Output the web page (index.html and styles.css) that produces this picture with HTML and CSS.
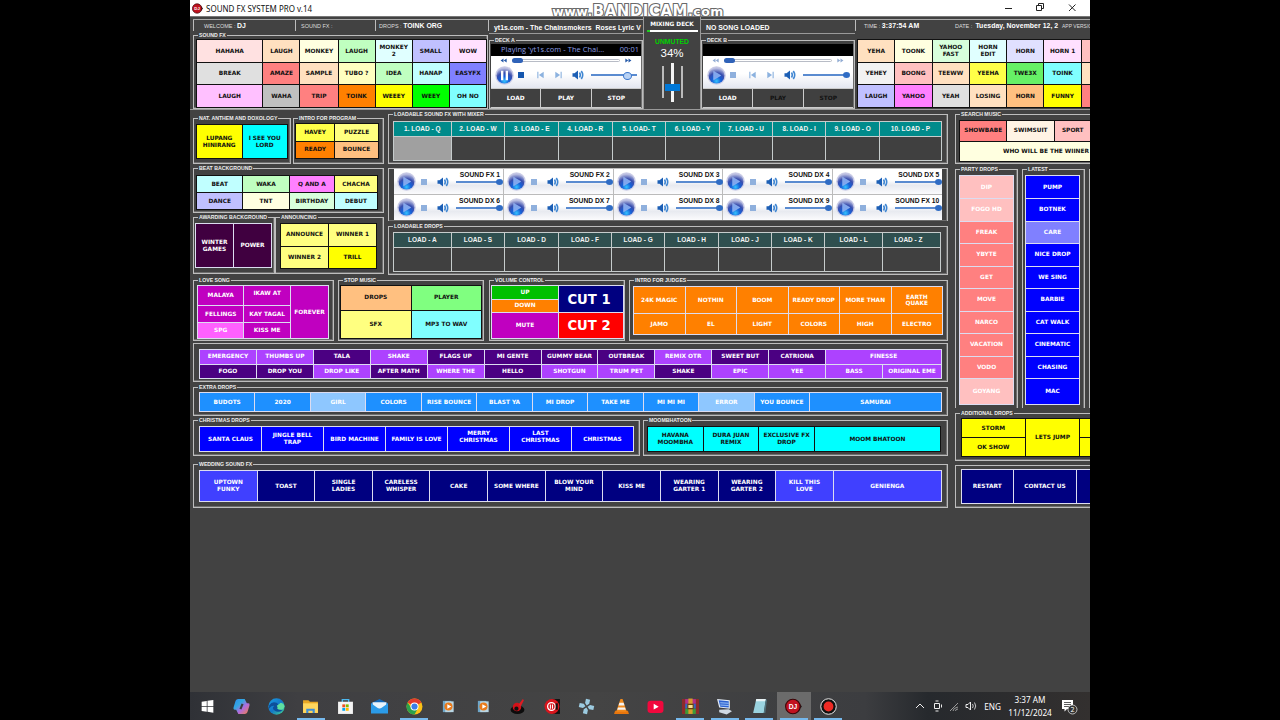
FILE: index.html
```html
<!DOCTYPE html>
<html lang="en">
<head>
  <meta charset="UTF-8" />
  <meta name="viewport" content="width=device-width, initial-scale=1.0"/>
  <title>SOUND FX SYSTEM PRO v.14</title>
  <link rel="stylesheet" href="styles.css">
</head>
<body>

  <!-- shared icons -->
  <svg class="defs" width="0" height="0">
    <defs>
      <radialGradient id="orb" cx="50%" cy="85%" r="80%">
        <stop offset="0" stop-color="#35c3ff"/>
        <stop offset="0.35" stop-color="#1560d8"/>
        <stop offset="0.65" stop-color="#3a4fae"/>
        <stop offset="1" stop-color="#b9bde0"/>
      </radialGradient>
      <linearGradient id="edgeGrad" x1="0" y1="0" x2="1" y2="1">
        <stop offset="0" stop-color="#1b9de2"/>
        <stop offset="0.5" stop-color="#1377c9"/>
        <stop offset="1" stop-color="#45d88b"/>
      </linearGradient>
      <linearGradient id="copilot" x1="0" y1="0" x2="1" y2="1">
        <stop offset="0" stop-color="#2a8df0"/>
        <stop offset="0.35" stop-color="#35a7e0"/>
        <stop offset="0.6" stop-color="#b06be0"/>
        <stop offset="1" stop-color="#f5803d"/>
      </linearGradient>
    </defs>
    <symbol id="play" viewBox="0 0 20 20">
      <circle cx="10" cy="10" r="9.8" fill="#c9cbe6"/>
      <circle cx="10" cy="10" r="8.4" fill="url(#orb)"/>
      <path d="M7 5.5 14.5 10 7 14.5z" fill="#7fa6ee" stroke="#a9c4f6" stroke-width="0.5"/>
    </symbol>
    <symbol id="pause" viewBox="0 0 20 20">
      <circle cx="10" cy="10" r="9.8" fill="#c9cbe6"/>
      <circle cx="10" cy="10" r="8.4" fill="url(#orb)"/>
      <path d="M6.3 5h2.5v10H6.3zM11.2 5h2.5v10h-2.5z" fill="#fff"/>
    </symbol>
    <symbol id="prev" viewBox="0 0 10 10">
      <path d="M1 1h1.4v8H1zM9 1v8L3 5z" fill="#8cb2df"/>
    </symbol>
    <symbol id="next" viewBox="0 0 10 10">
      <path d="M7.600 1H9v8H7.600zM1 1v8l6-4z" fill="#8cb2df"/>
    </symbol>
    <symbol id="volume" viewBox="0 0 12 10">
      <path d="M0.500 3.200h2L6 0.500v9L2.500 6.800h-2z" fill="#1c5fb5"/>
      <path d="M7.500 2.500q1.500 2.500 0 5M9.300 1q2.800 4 0 8" fill="none" stroke="#3f86d2" stroke-width="1.600"/>
    </symbol>
    <symbol id="rew" viewBox="0 0 8 6">
      <path d="M4 0.500v5L0.500 3zM7.800 0.500v5L4.300 3z" fill="#2459a8"/>
    </symbol>
    <symbol id="ffw" viewBox="0 0 8 6">
      <path d="M4 0.500v5L7.500 3zM0.200 0.500v5L3.700 3z" fill="#2459a8"/>
    </symbol>
    <symbol id="dj" viewBox="0 0 14 14">
      <path d="M10.500 3 14 7l-3.500 4z" fill="#222"/>
      <circle cx="6.500" cy="7" r="6" fill="#c1121f" stroke="#3a0508" stroke-width="0.900"/>
      <text x="6.500" y="9" text-anchor="middle" font-family="Liberation Sans" font-size="5.500" font-weight="bold" fill="#fff">DJ</text>
    </symbol>
    <symbol id="media" viewBox="0 0 16 16">
      <path d="M2 2h9v12H2z" fill="#6fa7c9"/>
      <path d="M4.500 2.500h9V14h-9z" fill="#b9d6e4"/>
      <circle cx="8" cy="8" r="4.300" fill="#e87b1c"/>
      <path d="M6.700 5.500 11 8l-4.300 2.500z" fill="#fff"/>
    </symbol>
  </svg>

  <div class="app">

    <!-- WINDOW TITLE -->
    <div class="titlebar">
      <svg class="logo"><use href="#dj"/></svg>
      <span class="title">SOUND FX SYSTEM PRO v.14</span>
      <svg class="winbtns" viewBox="0 0 80 12" fill="none" stroke="#222">
        <path d="M5 6.500h7"/>
        <path d="M36.500 3.500h5v5h-5zM38.500 3.500v-2h5v5h-2"/>
        <path d="M69 2.500l6.500 6.500M75.500 2.500 69 9"/>
      </svg>
    </div>
    <div class="watermark">www.<span>BANDICAM</span>.com</div>

    <!-- TOP ROW -->
    <div class="top">
      <div class="fx-col">
        <div class="info">
          <div class="info-cell w1">WELCOME : <b>DJ</b></div>
          <div class="info-cell w2">SOUND FX :</div>
          <div class="info-cell w3">DROPS : <b>TOINK ORG</b></div>
        </div>
        <div class="group fx">
          <span class="legend">SOUND FX</span>
          <div class="pads dark fx-pads">
            <button class="rose">HAHAHA</button>
            <button class="peach">LAUGH</button>
            <button class="cream">MONKEY</button>
            <button class="mint">LAUGH</button>
            <button class="ice">MONKEY<br>2</button>
            <button class="lavender">SMALL</button>
            <button class="blush">WOW</button>
            <button class="silver">BREAK</button>
            <button class="coral">AMAZE</button>
            <button class="peach">SAMPLE</button>
            <button class="lemon">TUBO ?</button>
            <button class="mint">IDEA</button>
            <button class="aqua">HANAP</button>
            <button class="periwinkle">EASYFX</button>
            <button class="pink">LAUGH</button>
            <button class="gray">WAHA</button>
            <button class="coral">TRIP</button>
            <button class="orange">TOINK</button>
            <button class="yellow">WEEEY</button>
            <button class="green">WEEY</button>
            <button class="cyan-soft">OH NO</button>
          </div>
        </div>
      </div>

      <div class="deck-col">
        <div class="song">yt1s.com - The Chainsmokers&nbsp; Roses Lyric V</div>
        <div class="group deck">
          <span class="legend">DECK A</span>
          <div class="display"><span>Playing 'yt1s.com - The Chai...</span><span>00:01</span></div>
          <div class="controls">
            <div class="seek"><svg><use href="#rew"/></svg><i></i><svg><use href="#ffw"/></svg></div>
            <div class="keys">
              <svg class="orb"><use href="#pause"/></svg>
              <span class="stop on"></span>
              <svg class="skip"><use href="#prev"/></svg>
              <svg class="skip"><use href="#next"/></svg>
              <svg class="vol"><use href="#volume"/></svg>
              <span class="slider mid"></span>
            </div>
          </div>
          <div class="deck-btns"><button>LOAD</button><button>PLAY</button><button>STOP</button></div>
        </div>
      </div>

      <div class="mixer">
        <div class="mix-title">MIXING DECK</div>
        <div class="mix-bar"></div>
        <div class="unmuted">UNMUTED</div>
        <div class="percent">34%</div>
        <div class="fader"><i></i><i class="track"></i><i></i></div>
      </div>

      <div class="deck-col deck-b">
        <div class="song">NO SONG LOADED</div>
        <div class="group deck">
          <span class="legend">DECK B</span>
          <div class="display"></div>
          <div class="controls">
            <div class="seek off"><svg><use href="#rew"/></svg><i></i><svg><use href="#ffw"/></svg></div>
            <div class="keys">
              <svg class="orb"><use href="#play"/></svg>
              <span class="stop"></span>
              <svg class="skip"><use href="#prev"/></svg>
              <svg class="skip"><use href="#next"/></svg>
              <svg class="vol"><use href="#volume"/></svg>
              <span class="slider"></span>
            </div>
          </div>
          <div class="deck-btns"><button>LOAD</button><button class="off">PLAY</button><button class="off">STOP</button></div>
        </div>
      </div>

      <div class="fx-right">
        <div class="info">
          <div class="info-cell time">TIME : <b>3:37:54 AM</b></div>
          <div class="info-cell date">DATE :&nbsp; <b>Tuesday, November 12, 2</b></div>
          <div class="info-cell ver">APP VERSION</div>
        </div>
        <div class="pads dark fx2-pads">
          <button class="peach">YEHA</button>
          <button class="cream">TOONK</button>
          <button class="mint-pale">YAHOO<br>FAST</button>
          <button class="ice">HORN<br>EDIT</button>
          <button class="lilac">HORN</button>
          <button class="blush">HORN 1</button>
          <button class="salmon"></button>
          <button class="smoke">YEHEY</button>
          <button class="salmon">BOONG</button>
          <button class="peach">TEEWW</button>
          <button class="yellow-mid">YEEHA</button>
          <button class="green-mid">TWE3X</button>
          <button class="cyan-soft">TOINK</button>
          <button class="peach"></button>
          <button class="lavender">LAUGH</button>
          <button class="violet-soft">YAHOO</button>
          <button class="silver">YEAH</button>
          <button class="peach">LOSING</button>
          <button class="tan">HORN</button>
          <button class="yellow">FUNNY</button>
          <button class="coral"></button>
        </div>
      </div>
    </div>

    <!-- MAIN AREA -->
    <div class="main">
      <div class="left">
        <div class="row-a">
          <div class="side">
            <div class="pair">
              <div class="group nat">
                <span class="legend">NAT. ANTHEM AND DOXOLOGY</span>
                <div class="pads dark nat-pads">
                  <button class="yellow">LUPANG<br>HINIRANG</button>
                  <button class="cyan">I SEE YOU<br>LORD</button>
                </div>
              </div>
              <div class="group program">
                <span class="legend">INTRO FOR PROGRAM</span>
                <div class="pads dark program-pads">
                  <button class="yellow-mid">HAVEY</button>
                  <button class="yellow-soft">PUZZLE</button>
                  <button class="orange">READY</button>
                  <button class="tan">BOUNCE</button>
                </div>
              </div>
            </div>
            <div class="group beat">
              <span class="legend">BEAT BACKGROUND</span>
              <div class="pads dark beat-pads">
                <button class="aqua">BEAT</button>
                <button class="mint">WAKA</button>
                <button class="violet-soft">Q AND A</button>
                <button class="yellow-soft">CHACHA</button>
                <button class="lavender">DANCE</button>
                <button class="cream">TNT</button>
                <button class="mint-pale">BIRTHDAY</button>
                <button class="aqua">DEBUT</button>
              </div>
            </div>
            <div class="pair last">
              <div class="group award">
                <span class="legend">AWARDING BACKGROUND</span>
                <div class="pads light award-pads">
                  <button class="plum">WINTER<br>GAMES</button>
                  <button class="plum">POWER</button>
                </div>
              </div>
              <div class="group announce">
                <span class="legend">ANNOUNCING</span>
                <div class="pads dark announce-pads">
                  <button class="yellow-soft">ANNOUNCE</button>
                  <button class="yellow-soft">WINNER 1</button>
                  <button class="yellow-soft">WINNER 2</button>
                  <button class="yellow">TRILL</button>
                </div>
              </div>
            </div>
          </div>

          <div class="center">
            <div class="group loads">
              <span class="legend">LOADABLE SOUND FX WITH MIXER</span>
              <div class="slots teal">
                <b>1. LOAD - Q</b><b>2. LOAD - W</b><b>3. LOAD - E</b><b>4. LOAD - R</b><b>5. LOAD- T</b>
                <b>6. LOAD - Y</b><b>7. LOAD - U</b><b>8. LOAD - I</b><b>9. LOAD - O</b><b>10. LOAD - P</b>
                <i class="selected"></i><i></i><i></i><i></i><i></i><i></i><i></i><i></i><i></i><i></i>
              </div>
            </div>
            <div class="group players">
              <div class="player-grid" id="players"></div>
            </div>
            <div class="group drops">
              <span class="legend">LOADABLE DROPS</span>
              <div class="slots slate">
                <b>LOAD - A</b><b>LOAD - S</b><b>LOAD - D</b><b>LOAD - F</b><b>LOAD - G</b>
                <b>LOAD - H</b><b>LOAD - J</b><b>LOAD - K</b><b>LOAD - L</b><b class="z">LOAD - Z</b>
                <i></i><i></i><i></i><i></i><i></i><i></i><i></i><i></i><i></i><i></i>
              </div>
            </div>
          </div>
        </div>

        <div class="row-b">
          <div class="group love">
            <span class="legend">LOVE SONG</span>
            <div class="pads light love-pads">
              <button class="magenta">MALAYA</button>
              <button class="magenta up">IKAW AT</button>
              <button class="magenta tall">FOREVER</button>
              <button class="magenta">FELLINGS</button>
              <button class="magenta">KAY TAGAL</button>
              <button class="magenta-soft">SPG</button>
              <button class="magenta">KISS ME</button>
            </div>
          </div>
          <div class="group stopmusic">
            <span class="legend">STOP MUSIC</span>
            <div class="pads dark stop-pads">
              <button class="tan">DROPS</button>
              <button class="green-soft">PLAYER</button>
              <button class="yellow-soft">SFX</button>
              <button class="cyan-soft">MP3 TO WAV</button>
            </div>
          </div>
          <div class="group volume">
            <span class="legend">VOLUME CONTROL</span>
            <div class="vol-pads">
              <div class="pads light vol-left">
                <button class="green-dark">UP</button>
                <button class="orange">DOWN</button>
                <button class="magenta">MUTE</button>
              </div>
              <div class="pads light vol-right">
                <button class="navy cut">CUT 1</button>
                <button class="red cut">CUT 2</button>
              </div>
            </div>
          </div>
          <div class="group judges">
            <span class="legend">INTRO FOR JUDGES</span>
            <div class="pads light judge-pads">
              <button class="orange">24K MAGIC</button>
              <button class="orange">NOTHIN</button>
              <button class="orange">BOOM</button>
              <button class="orange">READY DROP</button>
              <button class="orange">MORE THAN</button>
              <button class="orange">EARTH<br>QUAKE</button>
              <button class="orange">JAMO</button>
              <button class="orange">EL</button>
              <button class="orange">LIGHT</button>
              <button class="orange">COLORS</button>
              <button class="orange">HIGH</button>
              <button class="orange">ELECTRO</button>
            </div>
          </div>
        </div>

        <div class="group dance">
          <div class="pads light dance-pads">
            <button class="purple">EMERGENCY</button>
            <button class="purple">THUMBS UP</button>
            <button class="indigo">TALA</button>
            <button class="purple">SHAKE</button>
            <button class="indigo">FLAGS UP</button>
            <button class="indigo">MI GENTE</button>
            <button class="indigo">GUMMY BEAR</button>
            <button class="indigo">OUTBREAK</button>
            <button class="purple">REMIX OTR</button>
            <button class="indigo">SWEET BUT</button>
            <button class="indigo">CATRIONA</button>
            <button class="purple wide">FINESSE</button>
            <button class="indigo">FOGO</button>
            <button class="indigo">DROP YOU</button>
            <button class="purple">DROP LIKE</button>
            <button class="indigo">AFTER MATH</button>
            <button class="purple">WHERE THE</button>
            <button class="indigo">HELLO</button>
            <button class="purple">SHOTGUN</button>
            <button class="purple">TRUM PET</button>
            <button class="indigo">SHAKE</button>
            <button class="purple">EPIC</button>
            <button class="purple">YEE</button>
            <button class="purple">BASS</button>
            <button class="purple">ORIGINAL EME</button>
          </div>
        </div>

        <div class="group extra">
          <span class="legend">EXTRA DROPS</span>
          <div class="pads light extra-pads">
            <button class="dodger">BUDOTS</button>
            <button class="dodger">2020</button>
            <button class="sky">GIRL</button>
            <button class="dodger">COLORS</button>
            <button class="dodger">RISE BOUNCE</button>
            <button class="dodger">BLAST YA</button>
            <button class="dodger">MI DROP</button>
            <button class="dodger">TAKE ME</button>
            <button class="dodger">MI MI MI</button>
            <button class="sky">ERROR</button>
            <button class="dodger">YOU BOUNCE</button>
            <button class="dodger">SAMURAI</button>
          </div>
        </div>

        <div class="row-c">
          <div class="group xmas">
            <span class="legend">CHRISTMAS DROPS</span>
            <div class="pads light xmas-pads">
              <button class="blue">SANTA CLAUS</button>
              <button class="blue">JINGLE BELL<br>TRAP</button>
              <button class="blue">BIRD MACHINE</button>
              <button class="blue">FAMILY IS LOVE</button>
              <button class="blue up">MERRY<br>CHRISTMAS</button>
              <button class="blue up">LAST<br>CHRISTMAS</button>
              <button class="blue">CHRISTMAS</button>
            </div>
          </div>
          <div class="group moomba">
            <span class="legend">MOOMBHATOON</span>
            <div class="pads dark moomba-pads">
              <button class="cyan">HAVANA<br>MOOMBHA</button>
              <button class="cyan">DURA JUAN<br>REMIX</button>
              <button class="cyan">EXCLUSIVE FX<br>DROP</button>
              <button class="cyan">MOOM BHATOON</button>
            </div>
          </div>
        </div>

        <div class="group wedding">
          <span class="legend">WEDDING SOUND FX</span>
          <div class="pads light wedding-pads">
            <button class="royal">UPTOWN<br>FUNKY</button>
            <button class="navy">TOAST</button>
            <button class="navy">SINGLE<br>LADIES</button>
            <button class="navy">CARELESS<br>WHISPER</button>
            <button class="navy">CAKE</button>
            <button class="navy">SOME WHERE</button>
            <button class="navy">BLOW YOUR<br>MIND</button>
            <button class="navy">KISS ME</button>
            <button class="navy">WEARING<br>GARTER 1</button>
            <button class="navy">WEARING<br>GARTER 2</button>
            <button class="royal">KILL THIS<br>LOVE</button>
            <button class="royal">GENIENGA</button>
          </div>
        </div>
      </div>

      <div class="right">
        <div class="group search">
          <span class="legend">SEARCH MUSIC</span>
          <div class="pads dark search-pads">
            <button class="coral">SHOWBABE</button>
            <button class="linen">SWIMSUIT</button>
            <button class="salmon sport">SPORT</button>
            <button class="cream full">WHO WILL BE THE WIINER</button>
          </div>
        </div>
        <div class="lists">
          <div class="group party">
            <span class="legend">PARTY DROPS</span>
            <div class="pads light list-pads">
              <button class="salmon">DIP</button>
              <button class="salmon">FOGO HD</button>
              <button class="coral">FREAK</button>
              <button class="coral">YBYTE</button>
              <button class="coral">GET</button>
              <button class="coral">MOVE</button>
              <button class="coral">NARCO</button>
              <button class="coral">VACATION</button>
              <button class="coral">VODO</button>
              <button class="salmon">GOYANG</button>
            </div>
          </div>
          <div class="group latest">
            <span class="legend">LATEST</span>
            <div class="pads light list-pads">
              <button class="blue">PUMP</button>
              <button class="blue">BOTNEK</button>
              <button class="periwinkle">CARE</button>
              <button class="blue">NICE DROP</button>
              <button class="blue">WE SING</button>
              <button class="blue">BARBIE</button>
              <button class="blue">CAT WALK</button>
              <button class="blue">CINEMATIC</button>
              <button class="blue">CHASING</button>
              <button class="blue">MAC</button>
            </div>
          </div>
          <div class="group cutoff"></div>
        </div>
        <div class="group additional">
          <span class="legend">ADDITIONAL DROPS</span>
          <div class="pads dark additional-pads">
            <button class="yellow">STORM</button>
            <button class="yellow tall2">LETS JUMP</button>
            <button class="yellow"></button>
            <button class="yellow">OK SHOW</button>
            <button class="yellow"></button>
          </div>
        </div>
        <div class="group system">
          <div class="pads light system-pads">
            <button class="navy">RESTART</button>
            <button class="navy">CONTACT US</button>
            <button class="navy"></button>
          </div>
        </div>
      </div>
    </div>

    <!-- TASKBAR -->
    <div class="taskbar">
      <div class="task"><svg viewBox="0 0 16 16"><path d="M2.500 3.500 7.300 2.800v4.700H2.500zM8 2.700l5.500-.8v5.600H8zM2.500 8.200h4.800v4.700l-4.800-.7zM8 8.200h5.500v5.600L8 13z" fill="#fff"/></svg></div>
      <div class="task"><svg viewBox="0 0 16 16"><path d="M5 1h6l2 4h1.500Q16 5 15.500 7l-1.500 5q-.8 3-3 3H5L3 11H1.500Q0 11 .5 9L2 4q.8-3 3-3z" fill="url(#copilot)"/><path d="M9 5.500 7 10.500" stroke="#3c3c40" stroke-width="2"/></svg></div>
      <div class="task"><svg viewBox="0 0 16 16"><circle cx="8" cy="8" r="7.700" fill="url(#edgeGrad)"/><path d="M1 7q3-4.500 7-2.500 3 1.500 1.500 5 .8 1.500 4.500 1.500Q10 14.500 6.500 12T6 7.500Q3.500 6.500 1 10z" fill="#0d4f9b"/><path d="M8.300 7.200q1.200 1.300.4 3 2 1.600 5.600.4L15.600 8Q15 5 12 4.500z" fill="#5fe0a0"/></svg></div>
      <div class="task open"><svg viewBox="0 0 16 16"><path d="M1 2h5l1.500 1.500H15V14H1z" fill="#e9a825"/><path d="M1 5h14v9H1z" fill="#ffd75e"/><path d="M4 10h8v4h-2v-2H6v2H4z" fill="#3f8fd8"/></svg></div>
      <div class="task"><svg viewBox="0 0 16 16"><path d="M5 4V1.500h6V4" fill="none" stroke="#4db8ee" stroke-width="1.300"/><path d="M1 3.500h14V15H1z" fill="#f4f4f4"/><path d="M5 6h2.700v2.700H5z" fill="#f05022"/><path d="M8.300 6H11v2.700H8.300z" fill="#7fba00"/><path d="M5 9.300h2.700V12H5z" fill="#00a4ef"/><path d="M8.300 9.300H11V12H8.300z" fill="#ffb900"/></svg></div>
      <div class="task"><svg viewBox="0 0 16 16"><path d="M0 5 8 1l8 4v9H0z" fill="#1569b8"/><path d="M1.500 4h13v6h-13z" fill="#e8f4fc"/><path d="M0 5l8 5.500L16 5v9.500H0z" fill="#2b9be8"/></svg></div>
      <div class="task open"><svg viewBox="0 0 16 16"><circle cx="8" cy="8" r="7.500" fill="#fbc116"/><path d="M8 8 1.500 4.200A7.500 7.500 0 0 1 14.500 4.200z" fill="#e33b2e"/><path d="M1.500 4.200A7.500 7.500 0 0 0 8 15.500L11 10 5 9.500z" fill="#2ba24c"/><circle cx="8" cy="8" r="3.800" fill="#fff"/><circle cx="8" cy="8" r="2.900" fill="#3b7de8"/></svg></div>
      <div class="task small"><svg><use href="#media"/></svg></div>
      <div class="task small"><svg><use href="#media"/></svg></div>
      <div class="task"><svg viewBox="0 0 16 16"><ellipse cx="8" cy="11" rx="6.500" ry="4" fill="#0c0c0c"/><circle cx="7.500" cy="8.500" r="4" fill="#d21118"/><path d="M9 6l4-5 1 1-3 6z" fill="#e01b22"/><circle cx="7" cy="10" r="2" fill="#111"/></svg></div>
      <div class="task"><svg viewBox="0 0 16 16"><path d="M8 1h7v14H8z" fill="#111"/><circle cx="7.500" cy="8" r="7" fill="#d8151d"/><circle cx="7" cy="8" r="3.600" fill="none" stroke="#fff" stroke-width="1.200"/><path d="M6 6v4M8 6v4" stroke="#fff"/><path d="M12 5v6" stroke="#111" stroke-width="2"/></svg></div>
      <div class="task"><svg viewBox="0 0 16 16" fill="#9ccbe0"><path d="M6 1h4v4L8 7 6 5zM6 15h4v-4L8 9l-2 2zM1 6v4h4l2-2-2-2zM15 6v4h-4L9 8l2-2z" transform="rotate(12 8 8)"/></svg></div>
      <div class="task"><svg viewBox="0 0 16 16"><path d="M2 12h12l1 3H1z" fill="#e8760c"/><path d="M7 1h2l4 12H3z" fill="#f08a1c"/><path d="M6 4.500h4l.8 2.500H5.200zM4.700 9h6.600l.7 2H4z" fill="#f4f4f4"/></svg></div>
      <div class="task"><svg viewBox="0 0 16 16"><rect x="0.500" y="2.500" width="15" height="11.500" rx="3" fill="#f1083d"/><path d="M6.300 5.500 11 8.200l-4.700 2.700z" fill="#fff"/></svg></div>
      <div class="task open"><svg viewBox="0 0 16 16"><path d="M0 1h16v4.500H0z" fill="#b3308a"/><path d="M0 5.500h16V10H0z" fill="#3566c0"/><path d="M0 10h16v5H0z" fill="#3c9a3a"/><path d="M0 1h3v14H0zM13 1h3v14h-3z" fill="#8d2b2b"/><path d="M6 0.500h4V15H6z" fill="#d99a2b"/><path d="M5.500 6h5v4h-5z" fill="#f8e08c" stroke="#6b3f0c"/></svg></div>
      <div class="task open"><svg viewBox="0 0 16 16"><path d="M1 1l12 1v8L3 9z" fill="#e5edf6"/><path d="M2.500 2.200l9.500 .8v6L4 8.200z" fill="#2e62d0"/><path d="M4 4.500l8 .5M4 6.500l8 .5" stroke="#9cc2f5"/><path d="M3 11l9-.5 3 2-5 3-7-2z" fill="#cfd8e2"/></svg></div>
      <div class="task open"><svg viewBox="0 0 16 16"><path d="M5 1h9l-2 13H2z" fill="#9ad3df"/><path d="M5 1h9l-.4 2H4.500z" fill="#e9f2f4"/><path d="M12 14l2-13 1 .8L13.500 14z" fill="#50727c"/></svg></div>
      <div class="task open active"><svg><use href="#dj"/></svg></div>
      <div class="task open"><svg viewBox="0 0 16 16"><circle cx="8" cy="8" r="7.300" fill="#111" stroke="#f2f2f2" stroke-width="0.900"/><circle cx="8" cy="8" r="4.600" fill="#ee2a24"/></svg></div>
      <div class="tray">
        <svg class="tray-icons" viewBox="0 0 64 14" fill="none" stroke="#eee">
          <path d="M2 9l4-4 4 4"/>
          <path d="M20.500 4.500h5v5h-5zM21.500 2h3M21.500 12h3M27.500 5.500v3"/>
          <path d="M36 12l8-8M39 12q0-3 5-4M41.500 12q0-2 2.500-2" stroke="#999"/>
          <path d="M52 5.500h2l2.500-2.500v8L54 8.500h-2z"/>
          <path d="M58.500 5q1.500 2 0 4M60.500 3.500q2.500 3.500 0 7" stroke-width="0.800"/>
        </svg>
        <span class="lang">ENG</span>
        <span class="clock">3:37 AM<br>11/12/2024</span>
        <svg class="note" viewBox="0 0 18 18">
          <path d="M2 2h11v9H7l-2.500 2.500V11H2z" fill="#fff"/>
          <path d="M4 4.500h7M4 6.500h7M4 8.500h5" stroke="#333" stroke-width="0.800"/>
          <circle cx="12.500" cy="11.500" r="4.500" fill="#333" stroke="#ddd" stroke-width="0.800"/>
          <text x="12.500" y="14" text-anchor="middle" font-family="Noto Sans" font-size="7" fill="#fff">2</text>
        </svg>
      </div>
    </div>
  </div>

  <script src="script.js"></script>
</body>
</html>
```

FILE: styles.css
```css
* {
  margin: 0; padding: 0;
  box-sizing: border-box;
}

body {
  background: #000;
  height: 720px;
  overflow: hidden;
  font-family: "Liberation Sans", Arial, sans-serif;
}

button {
  font: inherit;
  color: inherit;
  border: none;
  background: none;
}

svg {
  display: block;
}

.defs {
  position: absolute;
}

.app {
  position: relative;
  width: 900px;
  height: 720px;
  margin: 0 auto;
  background: #424242;
  overflow: hidden;
  display: flex;
  flex-direction: column;
}

/* title bar */
.titlebar {
  height: 16px;
  flex: none;
  background: #fff;
  display: flex;
  align-items: center;
  padding-left: 2px;
}

.logo {
  width: 11px;
  height: 11px;
}

.title {
  margin-left: 3px;
  font: 8px "Noto Sans", sans-serif;
  color: #111;
}

.winbtns {
  width: 80px;
  height: 12px;
  margin-left: auto;
  margin-right: 10px;
}

.watermark {
  position: absolute;
  left: 358px;
  top: 2px;
  width: 180px;
  text-align: center;
  white-space: nowrap;
  font: bold 12.5px/18px "DejaVu Sans", sans-serif;
  letter-spacing: 0.5px;
  color: #fff;
  -webkit-text-stroke: 2.2px #6a6a6a;
  paint-order: stroke fill;
}

.watermark span {
  font-size: 15px;
}

/* group boxes */
.group {
  position: relative;
  border: 1px solid #bdbdbd;
  box-shadow: inset -1px -1px 0 #6e6e6e;
  flex: none;
}

.legend {
  position: absolute;
  left: 4px;
  top: -4px;
  padding: 0 1px;
  background: #424242;
  color: #eee;
  font-size: 5.2px;
  font-weight: bold;
  line-height: 7px;
  white-space: nowrap;
}

/* pads */
.pads {
  display: grid;
  gap: 1px;
  padding: 1px;
  font: bold 5.85px/6.6px "DejaVu Sans", Verdana, sans-serif;
  text-align: center;
}

.pads button {
  min-width: 0;
  min-height: 0;
  white-space: nowrap;
  overflow: hidden;
}

.dark {
  background: #111;
  color: #111;
}

.light {
  background: #dcdcf0;
  color: #fff;
}

.rose { background: #ffe1e1; }
.peach { background: #ffe0c0; }
.cream { background: #ffffe0; }
.mint { background: #c0ffc0; }
.mint-pale { background: #d8ffdc; }
.ice { background: #e0ffff; }
.lavender { background: #c0c0ff; }
.lilac { background: #e0e0ff; }
.blush { background: #ffe0ff; }
.silver { background: #e0e0e0; }
.smoke { background: #f2f2f2; }
.gray { background: #c0c0c0; }
.coral { background: #ff8080; }
.salmon { background: #ffc0c0; }
.linen { background: #fff3e4; }
.lemon { background: #ffffc0; }
.aqua { background: #c0ffff; }
.periwinkle { background: #8080ff; }
.pink { background: #ffc0ff; }
.orange { background: #ff8000; }
.tan { background: #ffc080; }
.yellow { background: #ffff00; }
.yellow-mid { background: #ffff48; }
.yellow-soft { background: #ffff80; }
.green { background: #00ff00; }
.green-soft { background: #80ff80; }
.green-mid { background: #66f066; }
.green-dark { background: #00c000; }
.cyan { background: #00ffff; }
.cyan-soft { background: #80ffff; }
.violet-soft { background: #ff80ff; }
.plum { background: #400040; }
.magenta { background: #c000c0; }
.magenta-soft { background: #ff60ff; }
.purple { background: #ad42ff; }
.indigo { background: #4b0082; }
.dodger { background: #1e90ff; }
.sky { background: #8ec7ff; }
.blue { background: #0000ff; }
.navy { background: #000080; }
.royal { background: #4040ff; }
.red { background: #ff0000; }

/* top row */
.top {
  height: 94px;
  flex: none;
  display: flex;
  border-top: 1px solid #777;
  border-bottom: 1px solid #999;
}

.fx-col {
  width: 296px;
  margin-left: 3px;
  padding-top: 2px;
}

.info {
  height: 12px;
  display: flex;
  border-top: 1px solid #aaa;
  color: #ddd;
  font-size: 5.5px;
  line-height: 12px;
  white-space: nowrap;
}

.info b {
  color: #fff;
  font-size: 6.9px;
}

.info-cell {
  border-left: 1px solid #bbb;
}

.w1 { width: 102px; padding-left: 10px; }
.w2 { width: 80px; padding-left: 5px; }
.w3 { width: 114px; padding-left: 3px; border-right: 1px solid #bbb; }

.fx {
  margin-top: 4px;
  width: 295px;
  height: 74px;
  padding: 3px 0 0 2px;
}

.fx-pads {
  width: 291px;
  height: 69px;
  grid-template-columns: 67fr 37fr 38fr 37fr 37fr 37fr 37fr;
  grid-template-rows: repeat(3, 1fr);
}

.deck-col {
  width: 154px;
  padding-top: 2px;
}

.song {
  height: 15px;
  padding: 2px 0 0 5px;
  overflow: hidden;
  border-top: 1px solid #aaa;
  border-bottom: 1px solid #999;
  color: #fff;
  font-size: 6.9px;
  font-weight: bold;
  line-height: 11px;
  white-space: nowrap;
}

.deck {
  margin-top: 6px;
  height: 69px;
  padding: 3px 1px 0;
}

.display {
  height: 12px;
  background: #000;
  color: #8d9fe0;
  font: 7.4px/11px "Open Sans", sans-serif;
  letter-spacing: 0.08px;
  display: flex;
  justify-content: space-between;
  padding: 0 2px 0 10px;
}

.controls {
  height: 32px;
  padding-top: 2px;
  background: linear-gradient(#fff 55%, #e4e7f0);
}

.seek {
  display: flex;
  align-items: center;
  padding: 0 9px;
  gap: 5px;
}

.seek.off svg {
  opacity: 0.5;
}

.seek svg {
  width: 7px;
  height: 5px;
}

.seek i {
  flex: 1;
  height: 3px;
  border: 1px solid #b8bcc6;
  border-radius: 2px;
  position: relative;
}

.seek i::before {
  content: "";
  position: absolute;
  left: -1px;
  top: -2px;
  width: 11px;
  height: 5px;
  border-radius: 3px;
  background: #2f62b8;
}

.keys {
  display: flex;
  align-items: center;
  padding-left: 4px;
  height: 24px;
}

.orb {
  width: 19px;
  height: 19px;
}

.stop {
  width: 6px;
  height: 6px;
  margin: 0 12px 0 4px;
  background: #8fb0dd;
}

.stop.on {
  background: #1556ae;
}

.skip {
  width: 9px;
  height: 8px;
  margin-right: 9px;
}

.vol {
  width: 12px;
  height: 10px;
}

.slider {
  position: relative;
  width: 46px;
  height: 2px;
  margin-left: 7px;
  background: #5a8bd0;
}

.slider::after {
  content: "";
  position: absolute;
  right: -1px;
  top: -2px;
  width: 7px;
  height: 6px;
  border-radius: 50%;
  background: #2f6cc4;
}

.slider.mid::after {
  right: 5px;
  background: #b9d2f4;
  border: 1px solid #3b77cc;
}

.deck-btns {
  display: flex;
  gap: 1px;
  height: 20px;
  padding: 1px 0;
  background: #ccc;
}

.deck-btns button {
  flex: 1;
  background: #404040;
  color: #fff;
  font: bold 5.85px "DejaVu Sans", sans-serif;
}

.deck-btns .off {
  color: #111;
}

.mixer {
  width: 58px;
  display: flex;
  flex-direction: column;
  align-items: center;
  border: solid #999;
  border-width: 0 1px;
}

.mix-title {
  margin-top: 3px;
  color: #fff;
  font: bold 5.8px/9px "DejaVu Sans", sans-serif;
}

.mix-bar {
  width: 51px;
  height: 2px;
  margin-top: 1px;
  background: linear-gradient(to right, #2c2 3px, #fff 3px);
}

.unmuted {
  margin-top: 5px;
  color: #00d000;
  font-size: 6.8px;
  font-weight: bold;
  line-height: 9px;
}

.percent {
  margin-top: 1px;
  color: #fff;
  font-size: 11.5px;
  line-height: 13px;
}

.fader {
  margin-top: 2px;
  height: 40px;
  display: flex;
  align-items: center;
  gap: 7px;
}

.fader i {
  width: 2px;
  height: 32px;
  background: #bbb;
}

.fader .track {
  position: relative;
  width: 3px;
  height: 39px;
  background: #f4f4f4;
}

.track::after {
  content: "";
  position: absolute;
  left: -6px;
  top: 21px;
  width: 15px;
  height: 7px;
  background: #0078d7;
}

.fx-right {
  flex: 1;
  min-width: 0;
  padding-top: 2px;
}

.fx-right .info-cell {
  flex: none;
}

.time { width: 100px; padding-left: 8px; }
.time b { letter-spacing: 0.15px; }
.fx-right .date { width: 107px; border: none; padding-left: 0; }
.date b { letter-spacing: 0.05px; }
.fx-right .ver { border: none; font-size: 5px; }

.fx2-pads {
  width: 262px;
  height: 69px;
  margin: 8px 0 0 2px;
  grid-template-columns: repeat(7, 1fr);
  grid-template-rows: repeat(3, 1fr);
}

/* main area */
.main {
  display: flex;
  padding-left: 3px;
}

.left {
  width: 755px;
  flex: none;
}

.row-a {
  display: flex;
  gap: 4px;
  height: 170px;
}

.side {
  width: 191px;
  padding-top: 8px;
}

.pair {
  display: flex;
  gap: 2px;
}

.last {
  gap: 0;
  margin-top: 4px;
}

.nat {
  width: 98px;
  height: 46px;
  padding: 5px 0 0 2px;
}

.nat-pads {
  width: 92px;
  height: 35px;
  grid-template-columns: 1fr 1fr;
}

.program {
  width: 91px;
  height: 46px;
  padding: 4px 0 0 1px;
}

.program-pads {
  width: 84px;
  height: 36px;
  grid-template-columns: 39fr 44fr;
}

.beat {
  margin-top: 4px;
  height: 45px;
  padding: 6px 0 0 2px;
}

.beat-pads {
  width: 182px;
  height: 35px;
  grid-template-columns: 46.500fr 46.500fr 45.500fr 43fr;
}

.award {
  width: 82px;
  height: 57px;
  padding: 5px 0 0 1px;
}

.award-pads {
  width: 77px;
  height: 45px;
  grid-template-columns: 1fr 1fr;
}

.announce {
  width: 109px;
  height: 57px;
  padding: 5px 0 0 4px;
}

.announce-pads {
  width: 97px;
  height: 46px;
  grid-template-columns: 1fr 1fr;
}

.center {
  width: 560px;
  padding-top: 4px;
}

.loads {
  height: 50px;
  padding: 6px 0 0 4px;
}

.slots {
  width: 549px;
  height: 40px;
  display: grid;
  grid-template-columns: 57.500fr 53.500fr 53.500fr 53.500fr 53.500fr 53.500fr 53fr 53fr 53.500fr 62fr;
  grid-template-rows: 14px 1fr;
  gap: 1px;
  padding: 1px;
  background: #c6cccc;
}

.slate {
  width: 548px;
  grid-template-columns: 57.500fr 53.500fr 53.500fr 53fr 53fr 53.500fr 53fr 53fr 57.500fr 58fr;
}

.slots b {
  color: #f4f4f4;
  font-size: 6.5px;
  line-height: 13px;
  text-align: center;
}

.slots .z {
  padding-right: 6px;
}

.slots i {
  background: #404040;
}

.slots .selected {
  background: #a0a0a0;
}

.teal b { background: #008b8b; }
.slate b { background: #2f4f4f; }

.players {
  margin-top: 4px;
  height: 53px;
  padding-left: 5px;
  border-bottom: none;
}

.player-grid {
  width: 548px;
  height: 51px;
  display: grid;
  grid-template-columns: repeat(5, 1fr);
  grid-template-rows: 1fr 1fr;
  column-gap: 1px;
  row-gap: 1px;
  background: #bbb;
}

.player {
  display: flex;
  align-items: center;
  padding-left: 3px;
  background: linear-gradient(#fff 45%, #e8eaf0 65%, #fbfbfd);
}

.player .stop {
  flex: none;
  margin: 0 10px 0 5px;
}

.player-slot {
  width: 47px;
  margin-left: 6px;
  display: flex;
  flex-direction: column;
  align-items: flex-end;
  height: 23px;
}

.player-slot b {
  font-size: 6.7px;
  line-height: 9px;
  color: #111;
  white-space: nowrap;
  padding-right: 2px;
}

.player-slot .slider {
  margin-top: 2px;
}

.drops {
  margin-top: 5px;
  height: 49px;
  padding: 5px 0 0 4px;
}

.row-b {
  display: flex;
  height: 61px;
}

.love { width: 141px; padding: 4px 0 0 3px; }
.stopmusic { width: 146px; margin-left: 4px; padding: 4px 0 0 1px; }
.volume { width: 136px; margin-left: 5px; padding: 4px 0 0 1px; }
.judges { width: 319px; margin-left: 4px; padding: 5px 0 0 3px; }

.love-pads {
  width: 132px;
  height: 54px;
  grid-template-columns: 46.500fr 46.500fr 38fr;
}

.tall {
  grid-row: span 3;
  grid-column: 3;
}

.stop-pads {
  width: 142px;
  height: 54px;
  grid-template-columns: 1fr 1fr;
  grid-template-rows: 24fr 28fr;
}

.vol-pads {
  display: flex;
  width: 133px;
  height: 54px;
}

.vol-left {
  width: 68px;
  grid-template-rows: 13fr 12fr 26fr;
}

.vol-right {
  flex: 1;
  padding-left: 0;
}

.pads .cut {
  font-size: 13.2px;
  line-height: 16px;
  padding: 2px 4px 0 0;
}

.judge-pads {
  width: 310px;
  height: 49px;
  grid-template-columns: repeat(6, 1fr);
}

.dance {
  margin-top: 2px;
  height: 39px;
  padding: 5px 0 0 5px;
}

.dance-pads {
  width: 743px;
  height: 30px;
  grid-template-columns: repeat(12, 56fr) 58fr;
}

.wide {
  grid-column: span 2;
}

.extra {
  margin-top: 5px;
  height: 29px;
  padding: 4px 0 0 5px;
}

.extra-pads {
  width: 743px;
  height: 20px;
  grid-template-columns: repeat(11, 54.500fr) 131fr;
}

.row-c {
  display: flex;
  gap: 3px;
  margin-top: 4px;
}

.xmas {
  width: 447px;
  height: 36px;
  padding: 5px 0 0 5px;
}

.xmas-pads {
  width: 435px;
  height: 26px;
  grid-template-columns: repeat(7, 1fr);
}

.pads .up {
  padding-bottom: 4px;
}

.moomba {
  width: 305px;
  height: 36px;
  padding: 5px 0 0 3px;
}

.moomba-pads {
  width: 294px;
  height: 26px;
  grid-template-columns: repeat(3, 55fr) 126fr;
}

.wedding {
  margin-top: 8px;
  height: 44px;
  padding: 5px 0 0 5px;
}

.wedding-pads {
  width: 743px;
  height: 32px;
  grid-template-columns: repeat(11, 57fr) 108fr;
}

/* right side, runs off the window edge */
.right {
  width: 200px;
  flex: none;
  margin-left: 7px;
  padding-top: 4px;
}

.search {
  height: 50px;
  padding: 5px 0 0 3px;
}

.search-pads {
  width: 174px;
  height: 42px;
  grid-template-columns: 47fr 47fr 78fr;
}

.pads .sport {
  text-align: left;
  padding-left: 7px;
}

.full {
  grid-column: span 3;
}

.lists {
  display: flex;
  gap: 4px;
  margin-top: 5px;
}

.party {
  width: 63px;
  height: 239px;
  padding: 5px 0 0 3px;
}

.latest {
  width: 63px;
  height: 239px;
  padding: 5px 0 0 2px;
}

.cutoff {
  width: 60px;
}

.party, .latest, .cutoff {
  border-bottom: none;
  box-shadow: inset -1px 0 0 #6e6e6e;
}

.list-pads {
  width: 55px;
  height: 230px;
  grid-template-rows: 22fr repeat(8, 21.500fr) 25fr;
}

.additional {
  margin-top: 5px;
  height: 48px;
  padding: 4px 0 0 5px;
}

.additional-pads {
  width: 174px;
  height: 39px;
  grid-template-columns: 63fr 54fr 54fr;
}

.tall2 {
  grid-row: span 2;
}

.system {
  margin-top: 4px;
  height: 43px;
  padding: 3px 0 0 5px;
}

.system-pads {
  width: 174px;
  height: 35px;
  grid-template-columns: 51fr 63fr 57fr;
}

/* taskbar */
.taskbar {
  height: 28px;
  margin-top: auto;
  flex: none;
  display: flex;
  background: linear-gradient(to right, #2f3136, #3f3f42 12%, #444 45%, #3c3d40 75%, #26292d 82%, #33302f);
}

.task {
  width: 34.500px;
  display: flex;
  align-items: center;
  justify-content: center;
}

.task svg {
  width: 17px;
  height: 17px;
}

.task.small svg {
  width: 15px;
  height: 15px;
}

.open {
  background: linear-gradient(#76b9ed, #76b9ed) center bottom / 28px 2px no-repeat;
}

.active {
  background-color: #6b6b6b;
}

.tray {
  margin-left: auto;
  display: flex;
  align-items: center;
  color: #fff;
  font: 8.200px/13px "Noto Sans", sans-serif;
}

.tray-icons {
  width: 64px;
  height: 14px;
}

.lang {
  margin-left: 6px;
}

.clock {
  width: 50px;
  margin-left: 4px;
  text-align: center;
}

.note {
  width: 18px;
  height: 18px;
  margin: 2px 12px 0 5px;
}
```

FILE: script.js
```js
const players = document.getElementById('players');

const names = [
  'SOUND FX 1', 'SOUND FX 2', 'SOUND DX 3', 'SOUND DX 4', 'SOUND DX 5',
  'SOUND DX 6', 'SOUND DX 7', 'SOUND DX 8', 'SOUND DX 9', 'SOUND FX 10'
];

names.forEach(name => {
  const player = document.createElement('div');
  player.className = 'player';
  player.innerHTML = `
    <svg class="orb"><use href="#play"/></svg>
    <span class="stop"></span>
    <svg class="vol"><use href="#volume"/></svg>
    <div class="player-slot"><b>${name}</b><span class="slider"></span></div>
  `;
  players.appendChild(player);
});
```
